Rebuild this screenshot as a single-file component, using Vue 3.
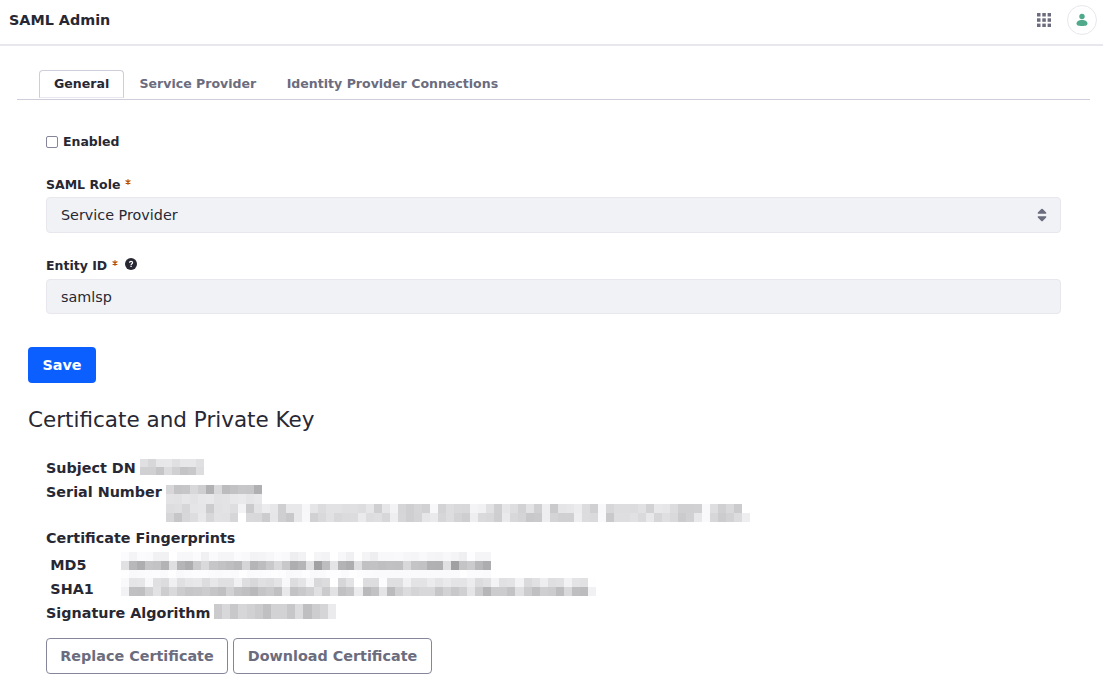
<script setup>
import { h } from 'vue'

const tabs = ['General', 'Service Provider', 'Identity Provider Connections']

// Each mosaic row is a list of grey levels (two hex digits per cell) and a row height in px.
const subject = [
  { size: 8, cells: 'e0d7e7e8e0e7e7e0' },
  { size: 8, cells: 'd0d0c5dcd0c4c8dd' },
]
const serialTop = [
  { size: 9, cells: 'd7c4c6d8ceb1d9bcc2c7c6b0' },
  { size: 10, cells: 'e3e2e6e3e7e8e2e3e8eae5e8' },
]
const serialBottom = [
  {
    size: 9,
    cells:
      'dddfd6e5e6cce1e3def3cbe3ec' +
      'e7cfe8e8f7e5dce2e2dfe0dde6cfe6f3d5cfd5d1f8d3ddd9d8f4f1e1cfe6' +
      'ded2e3d0eecae5e7ecdcd0f8d7dddddce1d2e8e6dcd0d0d1f9ded0d9cbff',
  },
  {
    size: 9,
    cells:
      'd6c6d7dde8d7e2e1d6ffd9d8cc' +
      'e6cfc8e8f8d1d9e1d8dbdceadddfd7eed6cfd4e6ead6ddd3ceeedad8ceea' +
      'd8d4c8caeed4d0d0eedcdaf9c9dedee1dae8d6dfd9cbd1e8f9d7ccd2dcee',
  },
]
const md5 = [
  {
    size: 9,
    cells:
      'fbf4fbfaf1f1fff7f7fbf0faf5f5fbf9f3f4f7fbf9eef2fff5f3' +
      'fff7f0fef4eef8f8f9f6f5f9f5f4f8f4effdf5f5',
  },
  {
    size: 9,
    cells:
      'e1b8aec5c3b3dfb5adcad9c6c2beb9d5b5bdc9d9c8aeb5e0a1bd' +
      'e4b3addfc1c2bfc1c0d8c4c2b1b0e0a0c4cbb8ad',
  },
  {
    size: 8,
    cells:
      'fef9fafbfcfafef9fbfcfdfbfafbfafefafbfcfefdf9fafdf9fa' +
      'fdfdfafefcfbfafafafafafafafafafafafefbfbfa',
  },
]
const sha = [
  {
    size: 9,
    cells:
      'f9e5e6f8e0dcf0e0e6e8dde7e0e0f1ded8e0dde4f8dde4f5d8dc' +
      'ffd6e3ffddddfcdfdff1e3e3ebe4eae4e4ecdce1f3e1e3f3dae1eedfe1f2e4e1fe',
  },
  {
    size: 9,
    cells:
      'f2c0bfd2e2cdd9ccc6c8ccc5c0d2c4c0b9c5cac0e8c3c9d0e0cb' +
      'e2c1c7ebb9c2e4bbd0dcd4d8d8c6d2c8d0e5ccb6ccccc3e0ccc0cfccbdd9bfbcf1',
  },
]
const algorithm = [{ size: 15, cells: 'cbd8c8d6d1cbc0d2d2c7dcbfcdd5eb' }]

const Mosaic = (props) => {
  let y = 0
  const height = props.rows.reduce((sum, row) => sum + row.size, 0)
  const rects = props.rows.flatMap((row) => {
    const levels = row.cells.match(/../g)
    const step = props.width / levels.length
    const top = y
    y += row.size
    return levels.map((v, i) => {
      const x = Math.round(i * step)
      const b = Math.min(255, parseInt(v, 16) + 2).toString(16)
      return h('rect', { x, y: top, width: Math.round((i + 1) * step) - x, height: row.size, fill: `#${v}${v}${b}` })
    })
  })
  return h('svg', { width: props.width, height, 'shape-rendering': 'crispEdges' }, rects)
}
Mosaic.props = ['rows', 'width']

const Star = () =>
  h('svg', { width: 6, height: 6, viewBox: '0 0 6 6' }, [
    h('path', { d: 'M3 .2V5.8M.6 1.500L5.400 4.500M5.400 1.500L.6 4.500', stroke: '#b95000', 'stroke-width': 1.2 }),
  ])
</script>

<template>
  <div class="page">
    <header class="bar">
      <h1>SAML Admin</h1>
      <div class="tools">
        <svg width="14" height="14" viewBox="0 0 14 14" fill="#6b6c7e">
          <template v-for="r in 3" :key="r">
            <rect v-for="c in 3" :key="c" :x="(c - 1) * 5.3" :y="(r - 1) * 5.3" width="3.5" height="3.5" />
          </template>
        </svg>
        <span class="avatar">
          <svg width="12" height="14" viewBox="0 0 12 14" fill="#50a98b">
            <circle cx="6" cy="3.500" r="2.700" />
            <path d="M6 7c3.200 0 5.500 1.600 5.500 3.600 0 1.700-1.500 2.500-5.500 2.500S.5 12.300.5 10.600C.5 8.600 2.800 7 6 7z" />
          </svg>
        </span>
      </div>
    </header>

    <nav class="tabs">
      <a v-for="(t, i) in tabs" :key="t" :class="['tab', { active: i === 0 }]">{{ t }}</a>
    </nav>

    <form class="fields" @submit.prevent>
      <label class="check"><input type="checkbox" /><span>Enabled</span></label>
      <div class="label role">SAML Role <Star class="star" /></div>
      <div class="control select">
        Service Provider
        <svg width="10" height="14" viewBox="0 0 10 14" fill="#6b6c7e">
          <path d="M4.300 1Q5 .3 5.700 1L9.200 4.500V5.800H.8V4.500zM.8 8.300H9.200V9.600L5.700 13.100Q5 13.700 4.300 13.100L.8 9.600z" />
        </svg>
      </div>
      <div class="label entity">
        Entity ID <Star class="star" />
        <svg class="help" width="12" height="12" viewBox="0 0 12 12">
          <circle cx="6" cy="6" r="6" fill="#272833" />
          <path d="M4.500 4.700C4.500 2.900 7.600 2.900 7.600 4.700 7.600 5.800 6.100 5.700 6.100 7" fill="none" stroke="#fff" stroke-width="1.200" />
          <rect x="5.400" y="7.700" width="1.300" height="1.300" fill="#fff" />
        </svg>
      </div>
      <div class="control">samlsp</div>
    </form>

    <button class="btn save">Save</button>

    <h2>Certificate and Private Key</h2>

    <section class="cert">
      <div class="row subject"><span>Subject DN</span><Mosaic :rows="subject" :width="64" /></div>
      <div class="row serial">
        <span>Serial Number</span>
        <div class="stack">
          <Mosaic :rows="serialTop" :width="96" />
          <Mosaic :rows="serialBottom" :width="584" />
        </div>
      </div>
      <div class="row prints">Certificate Fingerprints</div>
      <div class="hashes">
        <div class="names"><span>MD5</span><span>SHA1</span></div>
        <div class="stack">
          <Mosaic :rows="md5" :width="370" />
          <Mosaic :rows="sha" :width="475" />
        </div>
      </div>
      <div class="row algorithm"><span>Signature Algorithm</span><Mosaic :rows="algorithm" :width="122" /></div>
      <div class="actions">
        <button class="btn outline replace">Replace Certificate</button>
        <button class="btn outline download">Download Certificate</button>
      </div>
    </section>
  </div>
</template>

<style>
body {
  background: #fff;
  overflow: hidden;
}
</style>

<style scoped>
.page {
  box-sizing: border-box;
  width: 1103px;
  height: 677px;
  overflow: hidden;
  font-family: "DejaVu Sans", sans-serif;
  font-size: 14.35px;
  color: #272833;
}
.page * {
  box-sizing: border-box;
}
svg {
  display: block;
  flex: none;
}
.bar {
  display: flex;
  align-items: center;
  justify-content: space-between;
  height: 46px;
  padding: 0 6px 5px 9px;
  border-bottom: 2px solid #e7e7ed;
}
h1 {
  margin: 0;
  font-size: 14.35px;
  line-height: 20px;
}
.tools {
  display: flex;
  align-items: center;
  gap: 16px;
}
.avatar {
  display: flex;
  align-items: center;
  justify-content: center;
  width: 30px;
  height: 30px;
  border: 1px solid #e7e7ed;
  border-radius: 50%;
}
.tabs {
  display: flex;
  height: 54px;
  margin: 0 13px 0 17px;
  padding: 24px 0 0 22px;
  border-bottom: 1px solid #cdced9;
}
.tab {
  height: 28px;
  padding: 0 15px;
  font-size: 12.55px;
  font-weight: bold;
  line-height: 28px;
  color: #6b6c7e;
  white-space: nowrap;
}
.tab + .tab {
  margin-left: 0.5px;
}
.tab.active {
  width: 85px;
  padding: 0 14px;
  border: 1px solid #cdced9;
  border-bottom-color: #e7e7ed;
  border-radius: 4px 4px 0 0;
  line-height: 26px;
  color: #272833;
}
.fields {
  width: 1015px;
  margin-left: 46px;
  padding-top: 34px;
}
.check {
  display: flex;
  align-items: center;
  gap: 5px;
  height: 16px;
  font-size: 12.5px;
  font-weight: bold;
}
.check span {
  padding-bottom: 2px;
}
.check input {
  appearance: none;
  width: 12px;
  height: 12px;
  margin: 0;
  border: 1px solid #85869a;
  border-radius: 2px;
  background: #fff;
}
.label {
  display: flex;
  gap: 4.5px;
  height: 16px;
  font-size: 12.5px;
  font-weight: bold;
  line-height: 16px;
}
.role {
  margin: 27px 0 4px;
}
.entity {
  margin: 25px 0 5px;
}
.star {
  margin-top: 2px;
}
.help {
  margin-left: 3px;
}
.control {
  display: flex;
  align-items: center;
  justify-content: space-between;
  height: 35px;
  padding: 0 14px;
  border: 1px solid #e7e7ed;
  border-radius: 4px;
  background: #f1f2f5;
}
.select {
  height: 36px;
  padding-right: 13px;
}
.btn {
  display: block;
  height: 36px;
  padding: 0;
  border: 0;
  border-radius: 4px;
  font: bold 14.35px/34px "DejaVu Sans", sans-serif;
  white-space: nowrap;
}
.save {
  width: 68px;
  margin: 33px 0 0 28px;
  background: #0b5fff;
  color: #fff;
}
h2 {
  margin: 22px 0 0 28px;
  font-size: 21.5px;
  font-weight: normal;
  line-height: 30px;
}
.cert {
  padding: 23px 0 0 46px;
  font-weight: bold;
}
.row {
  display: flex;
  height: 24px;
  line-height: 20px;
}
.row > span {
  flex: none;
  white-space: nowrap;
}
.subject > span {
  width: 94px;
}
.serial > span {
  width: 120px;
}
.algorithm > span {
  width: 168px;
}
.subject svg {
  margin-top: 1px;
}
.serial {
  height: 46px;
}
.serial .stack {
  padding-top: 3px;
}
.prints {
  height: 24px;
}
.hashes {
  display: flex;
  height: 51px;
}
.names {
  display: flex;
  flex-direction: column;
  width: 75px;
  padding: 1px 0 0 4.3px;
  line-height: 24px;
}
.algorithm {
  height: 35px;
}
.algorithm svg {
  margin-top: 1px;
}
.actions {
  display: flex;
  gap: 5px;
}
.outline {
  border: 1px solid #85869a;
  background: #fff;
  color: #6b6c7e;
}
.replace {
  width: 182px;
}
.download {
  width: 199px;
}
</style>
